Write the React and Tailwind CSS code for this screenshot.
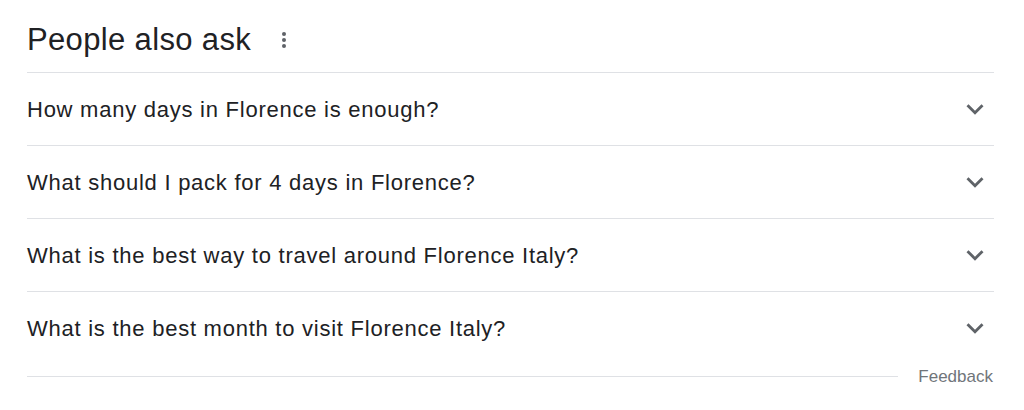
const QUESTIONS = [
  'How many days in Florence is enough?',
  'What should I pack for 4 days in Florence?',
  'What is the best way to travel around Florence Italy?',
  'What is the best month to visit Florence Italy?',
];

function Dots() {
  return (
    <svg width="6" height="18" viewBox="0 0 6 18" className="text-[#5f6368]">
      <circle cx="3" cy="3" r="2" fill="currentColor" />
      <circle cx="3" cy="9" r="2" fill="currentColor" />
      <circle cx="3" cy="15" r="2" fill="currentColor" />
    </svg>
  );
}

function ExpandMore() {
  return (
    <svg width="34" height="34" viewBox="0 0 24 24" className="text-[#5f6368] mr-[2px]">
      <path fill="currentColor" d="M16.59 8.59L12 13.17 7.41 8.59 6 10l6 6 6-6z" />
    </svg>
  );
}

export default function App() {
  return (
    <div className="w-[1024px] h-[410px] bg-white pl-[27px] pr-[30px] font-['Liberation_Sans',Arial,sans-serif]">
      <div className="flex items-center h-[72px] pt-[8px]">
        <h2 className="text-[31px] text-[#202124] tracking-[0.35px]">People also ask</h2>
        <div className="ml-[30px] flex items-center"><Dots /></div>
      </div>
      <div>
        {QUESTIONS.map((q, i) => (
          <div key={i} className="flex items-center justify-between h-[73px] border-t border-[#dfe1e5]">
            <span className="text-[22px] text-[#202124] tracking-[0.75px]">{q}</span>
            <ExpandMore />
          </div>
        ))}
      </div>
      <div className="flex items-center">
        <div className="flex-1 border-t border-[#dfe1e5]" />
        <span className="ml-[20px] mr-[1px] text-[17px] text-[#70757a]">Feedback</span>
      </div>
    </div>
  );
}
